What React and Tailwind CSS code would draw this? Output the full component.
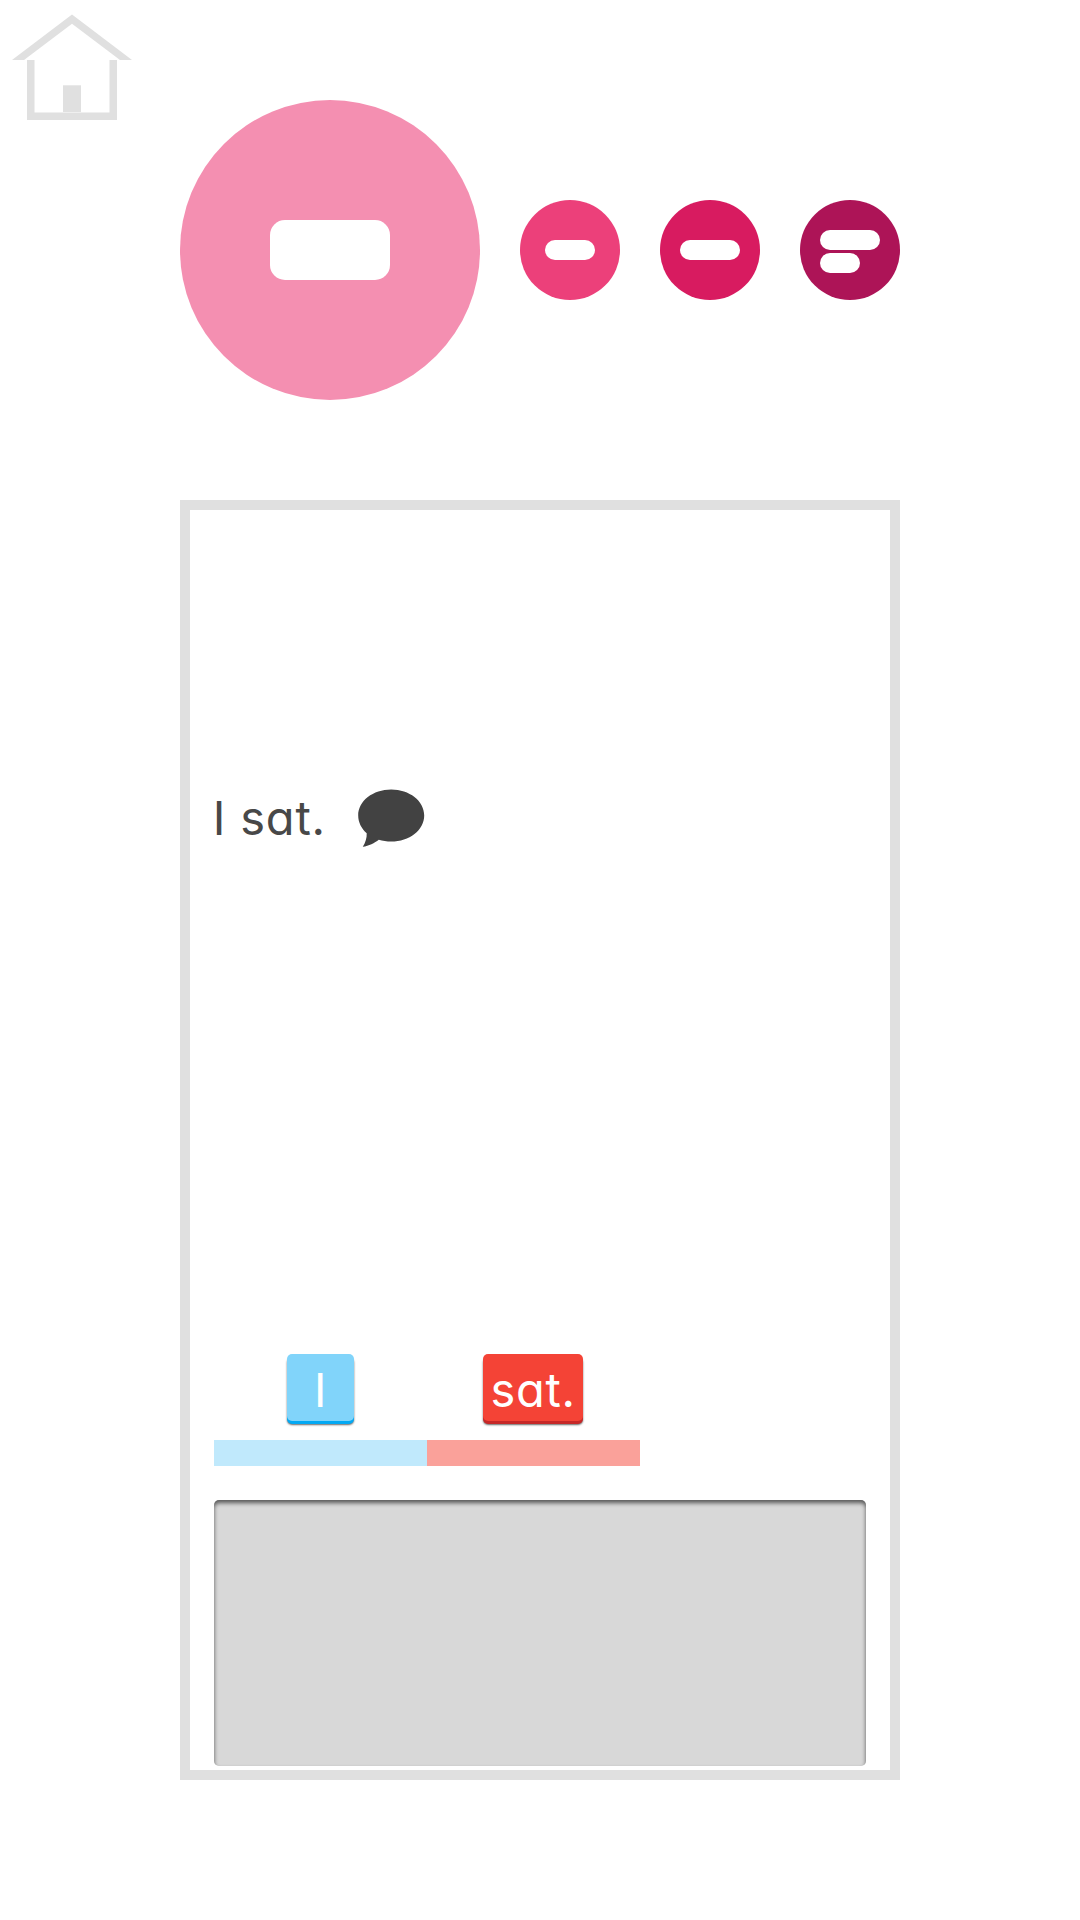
import React from "react";

const wordFont =
  "font-['Inter',sans-serif] font-normal [font-feature-settings:'cv11'] whitespace-pre";

function HomeIcon() {
  return (
    <svg className="block h-[144px] w-[144px]" viewBox="0 0 144 144" fill="#e0e0e0" aria-label="Home">
      <path d="M12 60 L72 14.5 L132 60 H120 L72 23.7 L24 60 Z" />
      <path d="M27 60 H34.5 V112.5 H109.5 V60 H117 V120 H27 Z" />
      <rect x="63" y="85.3" width="18" height="26.7" />
    </svg>
  );
}

function SpeechBubble() {
  return (
    <svg className="block h-[60px] w-[68px]" viewBox="0 0 68 60" fill="#424242">
      <path d="M34.2 1.4 C52.4 1.4 67.2 12.8 67.2 27.4 C67.2 42 52.4 53.5 34.2 53.5 C29.8 53.5 25.6 52.9 21.8 51.7 C17.6 54.7 11.8 58.2 5.8 58.7 C8.6 54.2 9.9 49.8 9.7 45.2 C4.4 40.4 1.2 34.2 1.2 27.4 C1.2 12.8 16 1.4 34.2 1.4 Z" />
    </svg>
  );
}

export default function App() {
  return (
    <div className="flex h-[1920px] w-[1080px] flex-col overflow-hidden bg-white">
      <header className="flex h-[500px]">
        <button className="h-[144px] w-[180px]">
          <HomeIcon />
        </button>
        <nav className="flex h-full w-[720px] items-center gap-10">
          <button className="flex size-[300px] items-center justify-center rounded-full bg-[#f48fb1]">
            <span className="h-[60px] w-[120px] rounded-[15px] bg-white" />
          </button>
          <button className="flex size-[100px] items-center justify-center rounded-full bg-[#ec407a]">
            <span className="h-5 w-[50px] rounded-full bg-white" />
          </button>
          <button className="flex size-[100px] items-center justify-center rounded-full bg-[#d81b60]">
            <span className="h-5 w-[60px] rounded-full bg-white" />
          </button>
          <button className="flex size-[100px] flex-col items-start gap-[3.4px] rounded-full bg-[#ad1457] pt-[30px] pl-5">
            <span className="h-5 w-[60px] rounded-full bg-white" />
            <span className="h-5 w-10 rounded-full bg-white" />
          </button>
        </nav>
      </header>

      <main className="mx-[180px] flex h-[1280px] flex-col border-[10px] border-[#e0e0e0] bg-white px-[23.6px]">
        <div className="flex h-[844px] items-start pt-[278px]">
          <p className={`${wordFont} -ml-[0.8px] w-[144.2px] text-[47px] leading-[60px] tracking-[0.8px] text-[#484848]`}>I sat.</p>
          <SpeechBubble />
        </div>

        <div className="grid h-[112px] w-[426px] grid-cols-2 grid-rows-[86px_26px]">
          <div className="flex justify-center">
            <div className="flex h-[67px] w-[67px] justify-center rounded-[5px] bg-[#81d4fa] shadow-[0_3px_0_#03a9f4,0_4px_2px_rgba(0,0,0,0.6)]">
              <span className={`${wordFont} text-[46px] leading-[72px] text-white`}>I</span>
            </div>
          </div>
          <div className="flex justify-center">
            <div className="flex h-[67px] w-[100.6px] justify-center rounded-[5px] bg-[#f44336] shadow-[0_3px_0_#c62828,0_4px_2px_rgba(0,0,0,0.6)]">
              <span className={`${wordFont} text-[47px] leading-[72px] tracking-[0.7px] text-white`}>sat.</span>
            </div>
          </div>
          <div className="bg-[#c0e9fc]" />
          <div className="bg-[#faa19a]" />
        </div>

        <div className="mt-[34px] h-[266px] rounded-[5px] bg-[#d8d8d8] shadow-[inset_0_3px_4px_rgba(0,0,0,0.6)]" />
      </main>
    </div>
  );
}
